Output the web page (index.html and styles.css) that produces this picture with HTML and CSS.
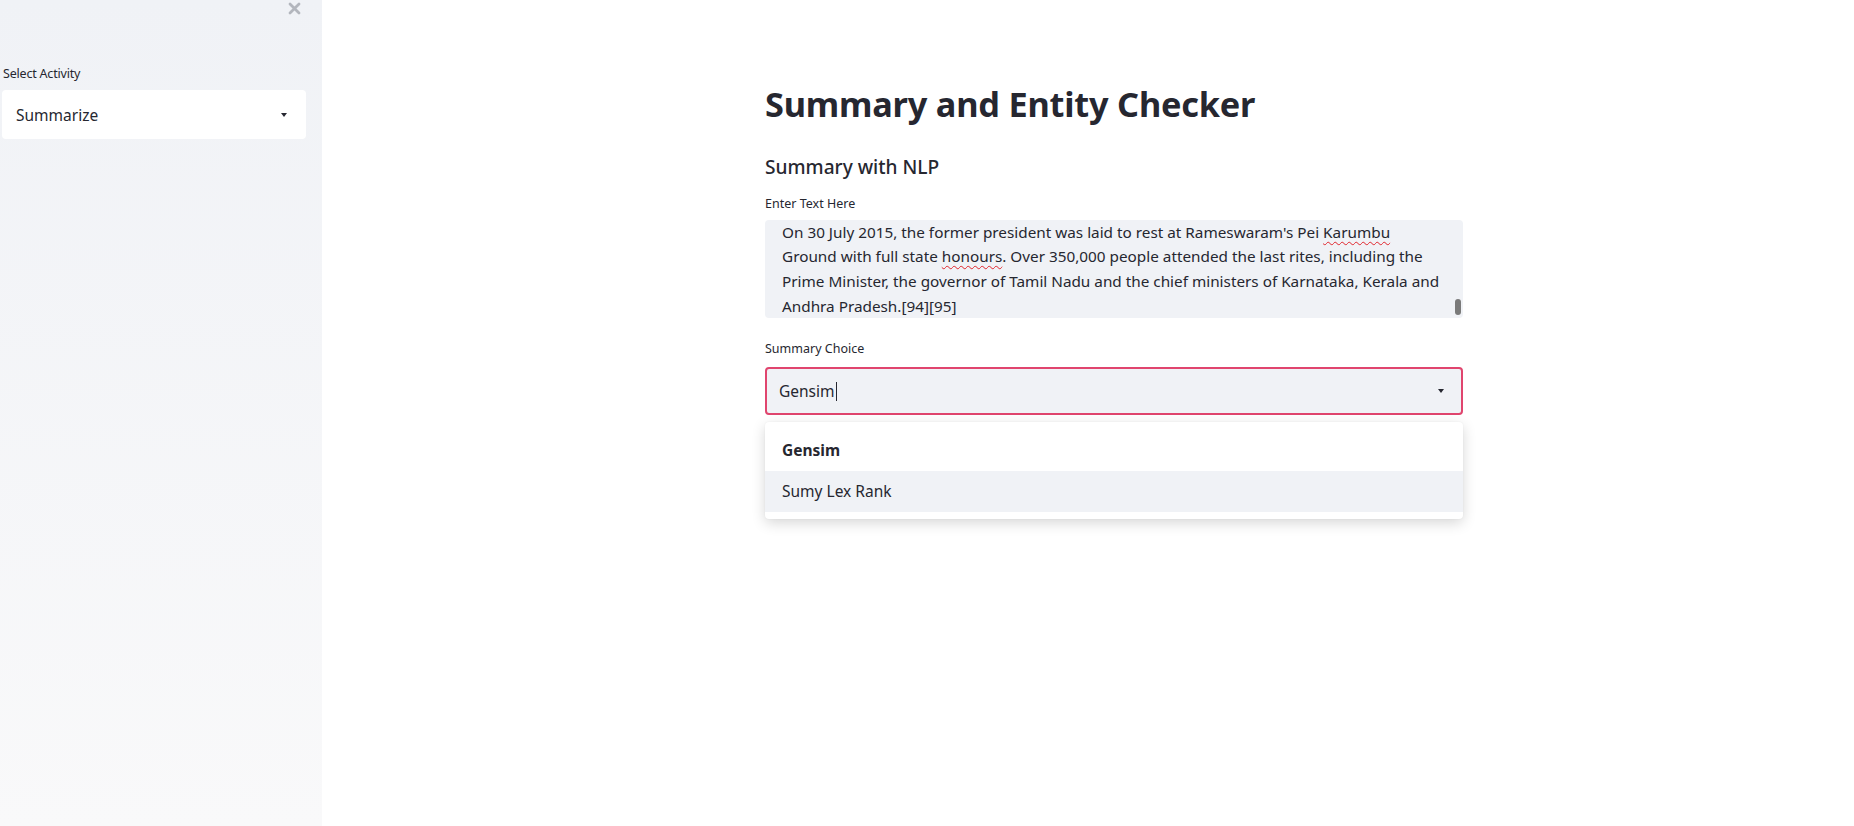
FILE: index.html
```html
<!DOCTYPE html>
<html lang="en">
<head>
<meta charset="utf-8">
<title>Summary and Entity Checker</title>
<link rel="stylesheet" href="styles.css">
</head>
<body>
<div class="app">
  <aside class="sidebar">
    <div class="sidebar-head">
      <span class="close-btn" aria-label="Close sidebar">
        <svg width="13" height="13" viewBox="0 0 13 13"><path d="M2 2 L11 11 M11 2 L2 11" stroke="#b3b6bd" stroke-width="2.8" stroke-linecap="round"/></svg>
      </span>
    </div>
    <div class="sidebar-body">
      <div class="field-label side-label">Select Activity</div>
      <div class="side-select">
        <span class="select-value">Summarize</span>
        <span class="caret-down"></span>
      </div>
    </div>
  </aside>
  <main class="main">
    <div class="block">
      <h1 class="title">Summary and Entity Checker</h1>
      <h2 class="subtitle">Summary with NLP</h2>
      <div class="field-label first-label">Enter Text Here</div>
      <div class="textarea">
        <div class="textarea-text">
          <span class="line">On 30 July 2015, the former president was laid to rest at Rameswaram's Pei <span class="spell">Karumbu</span></span>
          <span class="line">Ground with full state <span class="spell">honours</span>. Over 350,000 people attended the last rites, including the</span>
          <span class="line">Prime Minister, the governor of Tamil Nadu and the chief ministers of Karnataka, Kerala and</span>
          <span class="line">Andhra Pradesh.[94][95]</span>
        </div>
        <span class="scroll-thumb"></span>
      </div>
      <div class="field-label second-label">Summary Choice</div>
      <div class="select-wrap">
        <div class="main-select">
          <span class="select-value">Gensim<span class="text-caret"></span></span>
          <span class="caret-down"></span>
        </div>
        <ul class="dropdown">
          <li class="option selected">Gensim</li>
          <li class="option hovered">Sumy Lex Rank</li>
        </ul>
      </div>
    </div>
  </main>
</div>
</body>
</html>
```
FILE: styles.css
```css
* { box-sizing: border-box; }
html, body { margin: 0; padding: 0; }
body {
  font-family: "Noto Sans", Roboto, sans-serif;
  color: #262730;
  background: #ffffff;
}
.app {
  display: flex;
  min-height: 826px;
}
.sidebar {
  width: 322px;
  flex: 0 0 322px;
  background: linear-gradient(180deg, #f0f2f6 0%, #f9f9fa 100%);
  display: flex;
  flex-direction: column;
}
.sidebar-head {
  display: flex;
  justify-content: flex-end;
  padding: 2px 21px 0 0;
  height: 20px;
}
.close-btn {
  display: flex;
  width: 13px;
  height: 13px;
}
.sidebar-body {
  padding: 46px 16px 0 2px;
}
.field-label {
  font-size: 12.5px;
  line-height: 16px;
  color: #262730;
}
.side-label {
  padding-left: 1px;
  letter-spacing: -0.2px;
}
.side-select {
  margin-top: 8px;
  height: 49px;
  background: #ffffff;
  border-radius: 4px;
  display: flex;
  align-items: center;
  justify-content: space-between;
  padding: 0 19px 0 14px;
}
.select-value {
  font-size: 15.5px;
  line-height: 24px;
  display: flex;
  align-items: center;
}
.caret-down {
  width: 0;
  height: 0;
  border-left: 3.5px solid transparent;
  border-right: 3.5px solid transparent;
  border-top: 4px solid #262730;
}
.main {
  flex: 1;
  display: flex;
  justify-content: center;
  padding-left: 52px;
}
.block {
  width: 698px;
  padding-top: 84px;
  display: flex;
  flex-direction: column;
}
.title {
  margin: 0;
  font-size: 34.3px;
  line-height: 40px;
  font-weight: 700;
  letter-spacing: -0.2px;
  color: #262730;
}
.subtitle {
  margin: 29px 0 0;
  font-size: 19.1px;
  line-height: 28px;
  font-weight: 500;
  color: #262730;
}
.first-label { margin-top: 15px; }
.textarea {
  position: relative;
  margin-top: 8px;
  height: 98px;
  background: #f0f2f6;
  border-radius: 4px;
  overflow: hidden;
  padding: 0 17px;
}
.textarea-text {
  margin-top: -0.3px;
  font-size: 15.3px;
  line-height: 24.7px;
  white-space: nowrap;
}
.line { display: block; }
.spell {
  text-decoration: underline wavy #e0242b;
  text-decoration-thickness: 1px;
  text-underline-offset: 3px;
}
.scroll-thumb {
  position: absolute;
  right: 2px;
  top: 79px;
  width: 6px;
  height: 16px;
  border-radius: 3px;
  background: #7a7a7a;
}
.second-label { margin-top: 23px; }
.select-wrap {
  position: relative;
  margin-top: 10px;
}
.main-select {
  height: 48px;
  background: #f0f2f6;
  border: 2px solid #e0456e;
  border-radius: 4px;
  display: flex;
  align-items: center;
  justify-content: space-between;
  padding: 0 17px 0 12px;
}
.main-select .select-value { line-height: 20px; }
.text-caret {
  display: inline-block;
  width: 1px;
  height: 19px;
  background: #262730;
  margin-left: 1px;
}
.dropdown {
  position: absolute;
  left: 0;
  right: 0;
  top: calc(100% + 7px);
  margin: 0;
  padding: 8px 0 7px;
  list-style: none;
  background: #ffffff;
  border-radius: 4px;
  box-shadow: 0 4px 14px rgba(0, 0, 0, 0.16), 0 0 2px rgba(0, 0, 0, 0.06);
}
.option {
  height: 41px;
  line-height: 41px;
  padding: 0 17px;
  font-size: 15.5px;
  color: #262730;
}
.option.selected { font-weight: 700; }
.option.hovered { background: #f0f2f6; }
```
